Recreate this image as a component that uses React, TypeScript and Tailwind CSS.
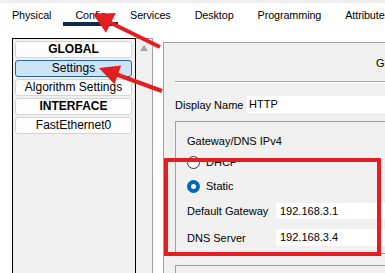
export default function App() {
    const tabs = ["Physical", "Config", "Services", "Desktop", "Programming", "Attributes"];
    const items = [
        { label: "GLOBAL", bold: true },
        { label: "Settings", active: true },
        { label: "Algorithm Settings" },
        { label: "INTERFACE", bold: true },
        { label: "FastEthernet0" },
    ];

    return (
        <div className="relative w-[385px] h-[273px] overflow-hidden bg-white font-['Liberation_Sans',Arial,sans-serif] text-black">
            <div className="h-[3px] bg-[#eeeeee]" />

            {/* Tabs */}
            <div className="flex h-[23px] whitespace-nowrap text-[10.8px] leading-[14px] tracking-[-0.1px]">
                {tabs.map((t) => (
                    <div
                        key={t}
                        className={`shrink-0 px-3 pt-[5px] h-[23px] border-b-[4px] ${t === "Config" ? "border-[#0d2a4a]" : "border-transparent"}`}
                    >
                        {t}
                    </div>
                ))}
            </div>

            <div className="flex mt-[12px] h-[300px]">
                {/* Left list */}
                <div className="shrink-0 ml-[12px] w-[124px] border-l border-t border-r border-black bg-[#f0f0f0] pl-[2px] pt-[2px] flex flex-col gap-[2px]">
                    {items.map((it) => (
                        <div
                            key={it.label}
                            className={`w-[117px] h-[17px] rounded-[3px] border text-[12px] leading-[14px] text-center ${it.active ? "bg-[#cce4f7] border-[#2a64a8]" : "bg-[#fdfdfd] border-[#d4d4d4]"} ${it.bold ? "font-bold" : ""}`}
                        >
                            {it.label}
                        </div>
                    ))}
                </div>

                {/* Scrollbar */}
                <div className="shrink-0 w-[17px] bg-[#f0f0f0] border-r border-t border-[#a0a0a0] flex justify-center pt-[6px]">
                    <svg width="8" height="6" viewBox="0 0 8 6">
                        <polygon points="4,0 8,6 0,6" fill="#a3a3a3" />
                    </svg>
                </div>

                {/* Right panel */}
                <div className="shrink-0 ml-[10px] mt-[4px] w-[300px] border-l border-t border-[#a0a0a0] bg-[#f0f0f0] pl-[11px] text-[11px] leading-[14px]">
                    <div className="h-[38px] pl-[201px] pt-[13px] whitespace-nowrap">Global Settings</div>
                    <div className="border-t border-[#a0a0a0] border-b border-b-white" />
                    <div className="flex items-center mt-[13px] h-[17px]">
                        <div className="w-[72px] shrink-0">Display Name</div>
                        <div className="flex-1 h-[17px] bg-white pl-[2px] leading-[17px]">HTTP</div>
                    </div>

                    <div className="mt-[8px] border-l border-t border-b border-[#a0a0a0] pl-[11px] pt-[12px] pb-[7px]">
                        <div className="h-[14px]">Gateway/DNS IPv4</div>
                        <div className="flex items-center gap-[6px] mt-[6px] h-[16px]">
                            <span className="w-[13px] h-[13px] rounded-full border border-[#333333] bg-white" />
                            <span>DHCP</span>
                        </div>
                        <div className="flex items-center gap-[6px] mt-[8px] h-[16px]">
                            <span className="w-[13px] h-[13px] rounded-full bg-[#0067c0] flex items-center justify-center">
                                <span className="w-[5px] h-[5px] rounded-full bg-white" />
                            </span>
                            <span>Static</span>
                        </div>
                        <div className="flex items-center mt-[9px] h-[16px]">
                            <div className="w-[89px] shrink-0">Default Gateway</div>
                            <div className="flex-1 h-[16px] bg-white pl-[4px] leading-[16px]">192.168.3.1</div>
                        </div>
                        <div className="flex items-center mt-[10px] h-[17px]">
                            <div className="w-[89px] shrink-0">DNS Server</div>
                            <div className="flex-1 h-[17px] bg-white pl-[4px] leading-[17px]">192.168.3.4</div>
                        </div>
                    </div>

                    <div className="mt-[11px] h-[40px] border-l border-t border-[#a0a0a0]" />
                </div>
            </div>

            {/* Annotation overlay */}
            <svg className="absolute left-0 top-0 pointer-events-none" width="385" height="273">
                <rect x="166" y="160" width="213" height="94" fill="none" stroke="#e41d22" strokeWidth="4" />
                <line x1="160" y1="47" x2="108" y2="21.5" stroke="#e41d22" strokeWidth="4" />
                <polygon points="93,14 115.8,12.9 106,32.7" fill="#e41d22" />
                <line x1="162" y1="91" x2="114" y2="73.5" stroke="#e41d22" strokeWidth="4" />
                <polygon points="99,68 121.2,65.5 114.4,84.3" fill="#e41d22" />
            </svg>
        </div>
    );
}
